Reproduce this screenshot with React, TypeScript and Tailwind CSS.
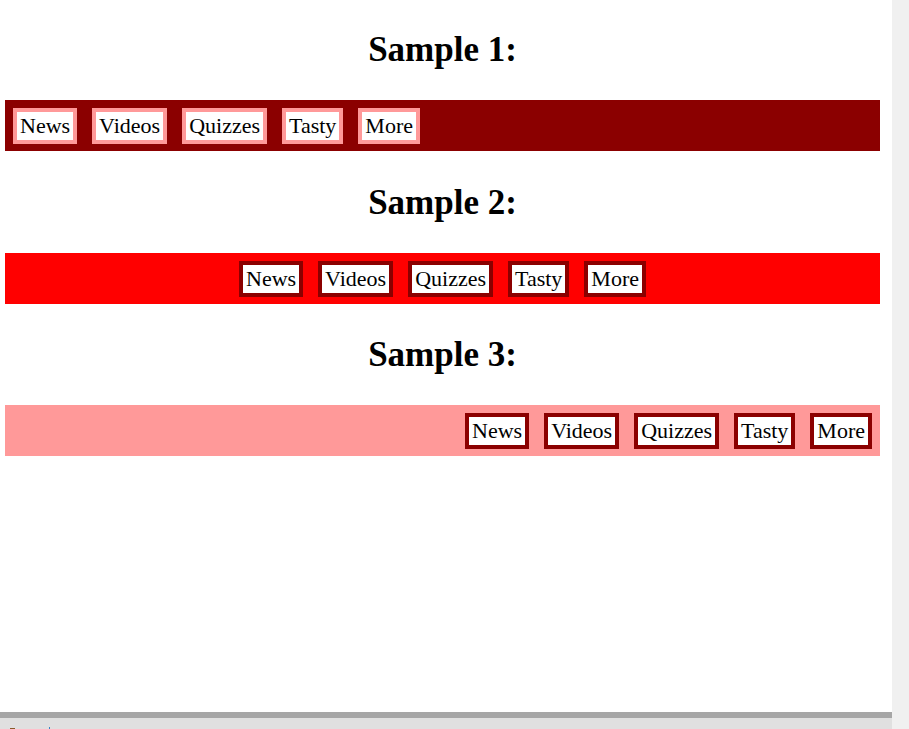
const items = ['News', 'Videos', 'Quizzes', 'Tasty', 'More'];

interface NavBarProps {
  barClass: string;
  boxClass: string;
}

function NavBar({ barClass, boxClass }: NavBarProps) {
  return (
    <div className={`h-[51px] flex items-center gap-[15px] px-[8px] ${barClass}`}>
      {items.map((item) => (
        <span
          key={item}
          className={`bg-white border-4 px-[3px] text-[22px] leading-[28px] text-black ${boxClass}`}
        >
          {item}
        </span>
      ))}
    </div>
  );
}

function Sample({ title, children, topClass }: { title: string; children: React.ReactNode; topClass: string }) {
  return (
    <section>
      <h1 className={`text-[35px] font-bold leading-[40px] text-center text-black mb-[30px] ${topClass}`}>
        {title}
      </h1>
      {children}
    </section>
  );
}

export default function App() {
  return (
    <div className="h-[729px] w-full flex bg-white overflow-hidden" style={{ fontFamily: '"Liberation Serif", "Times New Roman", serif' }}>
      <div className="flex-1 flex flex-col">
        {/* Page content */}
        <div className="flex-1">
          <div className="ml-[5px] w-[875px]">
            <Sample title="Sample 1:" topClass="mt-[30px]">
              <NavBar barClass="bg-[#8b0000] justify-start" boxClass="border-[#ff9999]" />
            </Sample>
            <Sample title="Sample 2:" topClass="mt-[32px]">
              <NavBar barClass="bg-[#ff0000] justify-center" boxClass="border-[#8b0000]" />
            </Sample>
            <Sample title="Sample 3:" topClass="mt-[31px]">
              <NavBar barClass="bg-[#ff9999] justify-end" boxClass="border-[#8b0000]" />
            </Sample>
          </div>
        </div>

        {/* Bottom panel */}
        <div className="h-[6px] bg-[#a6a6a6]" />
        <div className="h-[11px] bg-[#e0e0e0] relative">
          <span className="absolute left-[10px] top-[10px] w-[5px] h-[1px] bg-[#8a5a2a]" />
          <span className="absolute left-[49px] top-[9px] w-[1px] h-[2px] bg-[#3b82c4]" />
        </div>
      </div>

      {/* Scrollbar */}
      <div className="w-[17px] h-full bg-[#f0f0f0]" />
    </div>
  );
}
